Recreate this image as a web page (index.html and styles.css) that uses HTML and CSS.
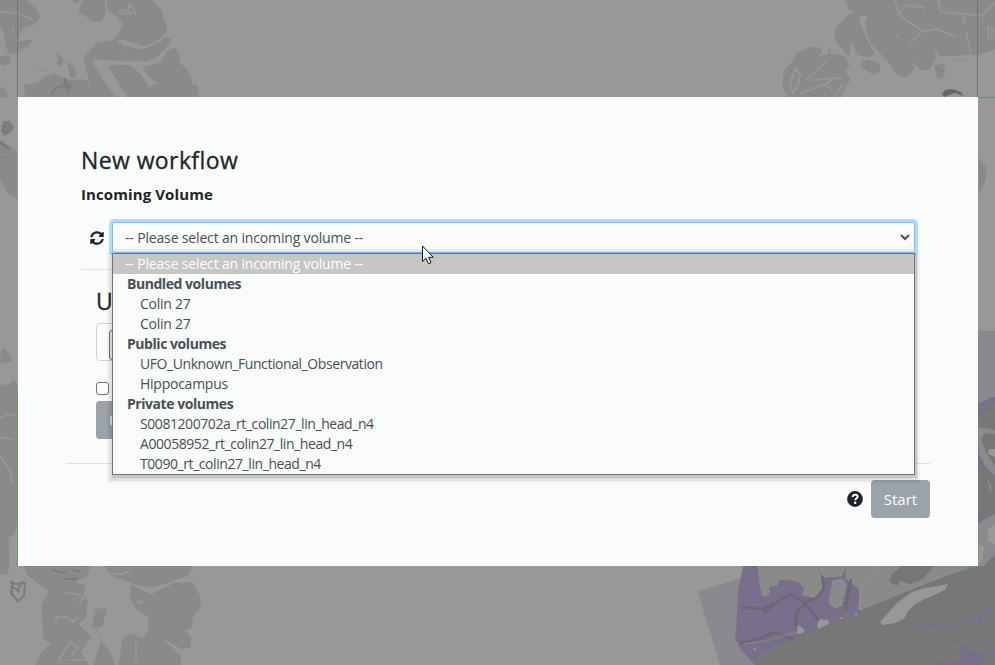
FILE: index.html
```
<!DOCTYPE html>
<html lang="en">
<head>
<meta charset="utf-8">
<title>New workflow</title>
<link rel="stylesheet" href="styles.css">
</head>
<body>
<svg class="viewer" viewBox="0 0 995 665" width="995" height="665" aria-hidden="true">
  <rect width="995" height="665" fill="#989898"/>
  <g fill="#8a8a8a" stroke="#8a8a8a" stroke-linejoin="round">
    <path d="M0 0H26L36 8L40 17L33 25L27 25L20 32L17 42L32 40L28 46L20 49L15 54L9 53L6 45L4 33L0 24Z"/>
    <path d="M0 57L9 56L11 62L6 65L0 64ZM0 87L6 90L7 97H0ZM72 0H79L77 3L73 2Z"/>
    <path d="M83 0H104L105 7L104 17L100 22L92 21L86 16L79 11Z"/>
    <path d="M107 0H152L160 9L166 26L167 30L162 37L153 42L144 46L133 42L124 39L113 41L118 35L124 24L116 16L108 9Z"/>
    <path d="M84 57L92 49L97 43L112 41L127 47L143 50L155 45L167 37L171 40L164 50L156 57L147 61L110 60L91 59L96 69L104 82L115 97H83L90 83Z"/>
    <path d="M109 67L116 65L131 66L140 74L148 85L149 97H128L116 79Z"/>
    <path d="M144 67L160 63L167 52L174 48L179 54L179 62L187 70L192 80L190 84L197 86L199 92L195 97H139L142 91L158 83L147 75Z"/>
    <path d="M25 85L37 84L45 77L55 74L68 80L86 80L94 97H25Z"/>
    <path d="M58 54L63 59L62 66L57 64ZM68 63L74 67L76 77L70 77Z" stroke-dasharray="1 1"/>
    <path d="M0 140L8 146L17 151V198L9 194L0 179ZM3 348L8 352L12 361L0 363ZM0 386L10 384L14 380L17 384V515L15 532L8 538L9 566H0Z"/>
    <path d="M846 0H995V49L979 54L940 56L933 46L936 58L929 69L921 70L913 61L908 48L914 69L905 77L896 74L889 62L871 43L867 32L866 21L869 16L858 15L849 9Z"/>
    <path d="M842 22L849 14L858 14L861 27L874 54L868 57L858 54L851 39L849 57L841 47L835 39L836 28Z"/>
    <path d="M862 61L869 60L879 64L880 71L874 74L862 68ZM829 48L831 50L829 53Z"/>
    <path d="M784 71L793 61L797 54L806 49L816 47L822 50L817 58L829 54L844 56L849 65L845 72L850 79L840 97H788L783 87Z"/>
    <path d="M935 66L944 64L944 77L938 79ZM979 159L986 167L985 180L979 194Z"/>
    <path d="M0 566H8V574L0 574ZM25 566H90L86 576L73 582L85 586L83 593L87 601L86 617L78 624L91 637L80 652L88 665H36L42 652L54 641L51 642L44 639L42 605L50 591L42 586L28 575Z"/>
    <path d="M106 566H192L188 575L164 584L150 587L135 584L111 575Z"/>
    <path d="M131 585L151 595L175 583L193 583L197 592L200 596L200 607L192 618L191 628L184 630L191 638L190 647L182 649L158 635L181 656L180 665H119L123 640L130 634L143 639L149 630V617L136 608L131 599Z"/>
    <path d="M96 609L106 609L102 626L92 628ZM101 641L109 650L115 665H94Z"/>
  </g>
  <g fill="none" stroke="#989898" stroke-width="1.700" stroke-linejoin="round">
    <path d="M0 12L18 13L33 20M13 28V34M118 12L128 10L129 4L134 9L135 13L120 14M790 90L791 80L796 68L800 75L798 84L792 94M800 94L829 82L836 77M807 80L828 59M810 80L842 78M824 85L832 89M834 97L843 84M895 0L899 15L924 32L936 29L958 37M898 14L907 5L925 8M921 33L908 45M895 38L900 33M938 0L942 12L965 14L963 24M967 14L982 16L995 2M966 31L971 55M988 27H992V38H988Z"/>
    <path d="M56 622V617L67 617L73 622L78 617M65 593L77 594L84 598L79 602M136 641L136 661M58 662L64 651L70 642L78 647L72 655M70 660L88 660M110 573L122 574L131 570M137 601L143 602L139 604M0 418L8 414L15 416M0 438L14 439M0 456L10 470L12 483M126 51H129M83 583L108 580"/>
    <path d="M78 570L87 568L82 576M95 611L92 623L98 629M93 635L91 648L82 658" stroke-dasharray="1 2"/>
  </g>
  <g fill="none" stroke="#7b7b7b">
    <path d="M51 95L56 88L64 86L65 78L66 88L71 83L68 93M52 570L66 573M65 579L77 579M73 570L80 571M10 582L15 584L25 583L24 596L18 601L11 593L12 586L20 592M12 581V596M23 581L18 589" stroke-width="2"/>
    <path d="M0 142L9 149" stroke-width="3"/>
    <path d="M58 53L62 61L60 67M69 62L71 75M64 85L76 73M36 70L41 70M44 71H50M952 60L969 60M938 66L943 76M12 608H22M96 627L102 641M0 157L15 155M2 167L16 180M4 178L17 172M979 163L984 178" stroke-dasharray="1 2"/>
  </g>
  <path d="M3 121H10L14 128L10 133L4 136L1 131Z" fill="#7d7d7d"/>
  <path d="M942 94L945 90L952 89L961 92L963 96L955 93L944 97Z" fill="#666967"/>

  <path d="M978 331H995V665H720L697.500 591.500L748 576L978 510Z" fill="#8b8990"/>
  <path d="M743 566H978V403L995 397V665H755L741 650L735 638L736 630L738 592Z" fill="#786f8b"/>
  <g fill="#8a8a8a" stroke="#9a999c" stroke-width="1" stroke-dasharray="2 2">
    <path d="M758 566H815L823 580L821 591L814 597L802 595L805 589L799 582L788 579L778 580L777 585L769 586L769 594L763 596L760 584Z"/>
    <path d="M816 566H846L841 576L824 577ZM833 581L842 579L846 584L845 592L841 606L835 608L829 603ZM847 566H995V596L864 611L859 609L860 589L846 579Z"/>
  </g>
  <path d="M757 662L759 655L777 647L802 634L827 626L846 615L858 614L864 609L918 587L965 569L995 558V608L985 611L980 617L955 620L934 626L913 627L908 635L920 636L935 629L957 619L985 619L992 636L992 646L976 651L960 646L961 661L935 665H757Z" fill="#777"/>
  <path d="M957 619H985L992 635L992 646L978 654L965 650L961 640L940 646L920 665H760L770 650L808 634L900 628Z" fill="#777"/>
  <path d="M902 566H934L922 580L910 584L900 581L897 586L889 582L892 574Z" fill="#767676"/>
  <path d="M880 622L897 603L912 592L925 588L938 586L948 584L945 590L925 599L915 604L907 612L905 618L895 623L883 625Z" fill="#989898"/>
  <path d="M763 614L774 604L790 594L804 602L819 621M805 602L817 598L824 588L822 576M804 604L796 614L796 626M740 643L759 639L774 632L794 640M851 579L845 611M742 607L762 609L773 604" fill="none" stroke="#6b6776" stroke-width="2.500" stroke-linejoin="round"/>
  <path d="M744 644L770 640L782 636L805 631" fill="none" stroke="#8a888c"/>
  <path d="M798 625L804 629L803 633L797 634ZM817 624L820 619L828 620L829 624L818 629ZM753 648L757 649L754 651ZM839 618L843 617V619ZM855 613H857V615H855Z" fill="#989898"/>
  <path d="M912 627L935 625L951 625L957 619L980 619L983 611L995 608M957 640L968 653L979 655L995 646M968 653L978 665M982 658L993 648M934 662L952 664L970 657" fill="none" stroke="#766f87" stroke-width="2.500"/>
  <path d="M859 610L861 588L873 573L879 566M936 577L978 566" fill="none" stroke="#999" stroke-dasharray="2 2"/>
  <path d="M898 597L906 593M950 577L978 567" stroke="#579451" stroke-dasharray="3 1"/>
  <path d="M978 407L982 404L984 411L989 400L995 399V665H978Z" fill="#777"/>
  <path d="M978 403L981 407L980 417ZM984 409L989 398L995 397V401L990 402L986 412ZM979 431H983L981 443L984 456L992 467H978ZM978 506L983 519L988 522L984 524L978 520Z" fill="#786f8b"/>
  <path d="M978 427L995 430V434L984 433L981 440L987 454L995 466V476L985 466L979 454ZM987 478L992 488L990 493ZM978 524L985 519L995 514V554L984 566H978Z" fill="#8b8a8e"/>
  <path d="M989 449H995V457L988 454ZM988 530L995 524V545L988 541ZM979 545L984 546L983 557L979 565Z" fill="#999"/>
  <path d="M978 619L983 610L995 607M979 619L984 625M978 654L987 656L995 651M979 665L984 655" fill="none" stroke="#766f8b" stroke-width="2.500"/>
  <path d="M978 331H995" stroke="#89878e"/>
  <path d="M17.500 0V97M977.500 0V97" stroke="#72717f"/>
  <path d="M17.500 390V566M978 97.500H995" stroke="#6f906b"/>
</svg>

<main class="dialog">
  <h1 class="title">New workflow</h1>
  <h2 class="subtitle">Incoming Volume</h2>
  <div class="volume-row">
    <svg class="sync" viewBox="0 0 512 512"><path fill="currentColor" d="M370.720 133.280C339.458 104.008 298.888 87.962 255.848 88c-77.458.068-144.328 53.178-162.791 126.850-1.344 5.363-6.122 9.150-11.651 9.150H24.103c-7.498 0-13.194-6.807-11.807-14.176C33.933 94.924 134.813 8 256 8c66.448 0 126.791 26.136 171.315 68.685L463.030 40.970C478.149 25.851 504 36.559 504 57.941V192c0 13.255-10.745 24-24 24H345.941c-21.382 0-32.090-25.851-16.971-40.971l41.750-41.749zM32 296h134.059c21.382 0 32.090 25.851 16.971 40.971l-41.750 41.750c31.262 29.273 71.835 45.319 114.876 45.280 77.418-.070 144.315-53.144 162.787-126.849 1.344-5.363 6.122-9.150 11.651-9.150h57.304c7.498 0 13.194 6.807 11.807 14.176C478.067 417.076 377.187 504 256 504c-66.448 0-126.791-26.136-171.315-68.685L48.970 471.030C33.851 486.149 8 475.441 8 454.059V320c0-13.255 10.745-24 24-24z"/></svg>
    <div class="select">
      <span>-- Please select an incoming volume --</span>
      <svg class="chevron" viewBox="0 0 10 7"><path d="M1 1L5 5L9 1" fill="none" stroke="#495057" stroke-width="2"/></svg>
      <div class="menu">
        <div class="option selected">-- Please select an incoming volume --</div>
        <div class="group">Bundled volumes</div>
        <div class="option nested">Colin 27</div>
        <div class="option nested">Colin 27</div>
        <div class="group">Public volumes</div>
        <div class="option nested long">UFO_Unknown_Functional_Observation</div>
        <div class="option nested">Hippocampus</div>
        <div class="group">Private volumes</div>
        <div class="option nested long">S0081200702a_rt_colin27_lin_head_n4</div>
        <div class="option nested long">A00058952_rt_colin27_lin_head_n4</div>
        <div class="option nested long">T0090_rt_colin27_lin_head_n4</div>
      </div>
    </div>
  </div>
  <section class="upload">
    <h2 class="upload-title">U</h2>
    <div class="file"><span class="file-button"></span></div>
    <span class="checkbox"></span>
    <div class="upload-button">U</div>
  </section>
  <footer class="footer">
    <svg class="help" viewBox="0 0 16 16"><circle cx="8" cy="8" r="7.900" fill="#212529"/><path d="M5.500 6C5.700 4.500 6.700 3.700 8.100 3.700C9.600 3.700 10.600 4.600 10.600 5.800C10.600 7.500 8.200 7.500 8.200 9.300" fill="none" stroke="#fafcfb" stroke-width="1.900"/><circle cx="8.200" cy="11.700" r="1.250" fill="#fafcfb"/></svg>
    <div class="start">Start</div>
  </footer>
</main>
<svg class="cursor" viewBox="0 0 12 20"><path d="M.5 1V16.500L4 13.300L6.500 18.800L9 17.700L6.600 12.300H11.300Z" fill="#fff" stroke="#15151f"/></svg>
</body>
</html>
```
FILE: styles.css
```
* { box-sizing: border-box; }
body {
  margin: 0;
  width: 995px;
  height: 665px;
  overflow: hidden;
  background: #989898;
  color: #212529;
  font-family: "Open Sans", "Noto Sans", sans-serif;
}
.viewer { position: absolute; left: 0; top: 0; }
.dialog {
  position: relative;
  width: 960px;
  height: 469px;
  margin: 97px 0 0 18px;
  padding: 49px 48px 48px;
  background: #fafcfb;
}
.title {
  margin: 0 15px;
  font-size: 23px;
  line-height: 29px;
  font-weight: 500;
  letter-spacing: .4px;
  -webkit-text-stroke: .3px #212529;
}
.subtitle {
  margin: 9px 15px 0;
  font-size: 15px;
  line-height: 20px;
  font-weight: 700;
  letter-spacing: .1px;
}
.volume-row {
  display: flex;
  align-items: flex-start;
  margin: 18px 15px 0;
  height: 48px;
  border-bottom: 1px solid #dfe1e1;
}
.sync { width: 14px; height: 14px; margin: 9px 8px 0 9px; }
.select {
  position: relative;
  display: flex;
  align-items: center;
  justify-content: space-between;
  width: 803px;
  height: 31px;
  padding: 0 4px 0 12px;
  border: 1px solid #80bdff;
  background: linear-gradient(to top, #e8eaea 3px, #fafcfb 3px);
  box-shadow: 0 0 0 3px #b8d8fb;
  border-radius: 2px;
  font-size: 14px;
  line-height: 20px;
  color: #495057;
  letter-spacing: -.16px;
}
.chevron { width: 10px; height: 7px; }
.menu {
  position: absolute;
  z-index: 2;
  left: -1px;
  top: 30px;
  width: 803px;
  height: 222px;
  border: 1px solid #707477;
  background: #fafcfb;
  box-shadow: 1px 2px 1px 1px rgba(0, 0, 0, .12), 0 3px 0 3px rgba(0, 0, 0, .06), 0 3px 1px 5px rgba(0, 0, 0, .04);
  white-space: nowrap;
}
.option, .group { height: 20px; line-height: 20px; padding-left: 12px; }
.group { padding-left: 14px; font-weight: 700; letter-spacing: -.45px; }
.nested { padding-left: 27px; letter-spacing: -.25px; }
.long { letter-spacing: -.43px; }
.selected { background: #c6c6c6; color: #fff; }
.upload {
  display: flex;
  flex-direction: column;
  height: 194px;
  padding: 17px 30px 0;
  border-bottom: 1px solid #dfe1e1;
}
.upload-title { margin: 0; font-size: 23px; line-height: 28px; font-weight: 500; -webkit-text-stroke: .3px #212529; }
.file { height: 38px; margin-top: 8px; padding: 7px 12px; border: 1px solid #ced4da; border-radius: 4px; }
.file-button { display: block; width: 100px; height: 30px; margin-top: -1px; border: 1px solid #707477; border-radius: 3px; background: #efefef; }
.checkbox { width: 13px; height: 13px; margin-top: 21px; border: 1px solid #707477; border-radius: 3px; background: #fff; }
.upload-button { width: 100px; height: 38px; margin-top: 6px; padding-left: 13px; border-radius: 4px; background: #9ba2a8; color: #fff; line-height: 38px; font-size: 15px; }
.footer { display: flex; justify-content: flex-end; align-items: center; gap: 8px; height: 38px; margin-top: 16px; }
.help { width: 16px; height: 16px; }
.start {
  width: 59px;
  height: 38px;
  border-radius: 4px;
  background: #9ba2a8;
  color: #fafcfb;
  font-size: 15px;
  line-height: 38px;
  text-align: center;
}
.cursor { position: absolute; z-index: 5; left: 422px; top: 245px; width: 12px; height: 20px; }
```
